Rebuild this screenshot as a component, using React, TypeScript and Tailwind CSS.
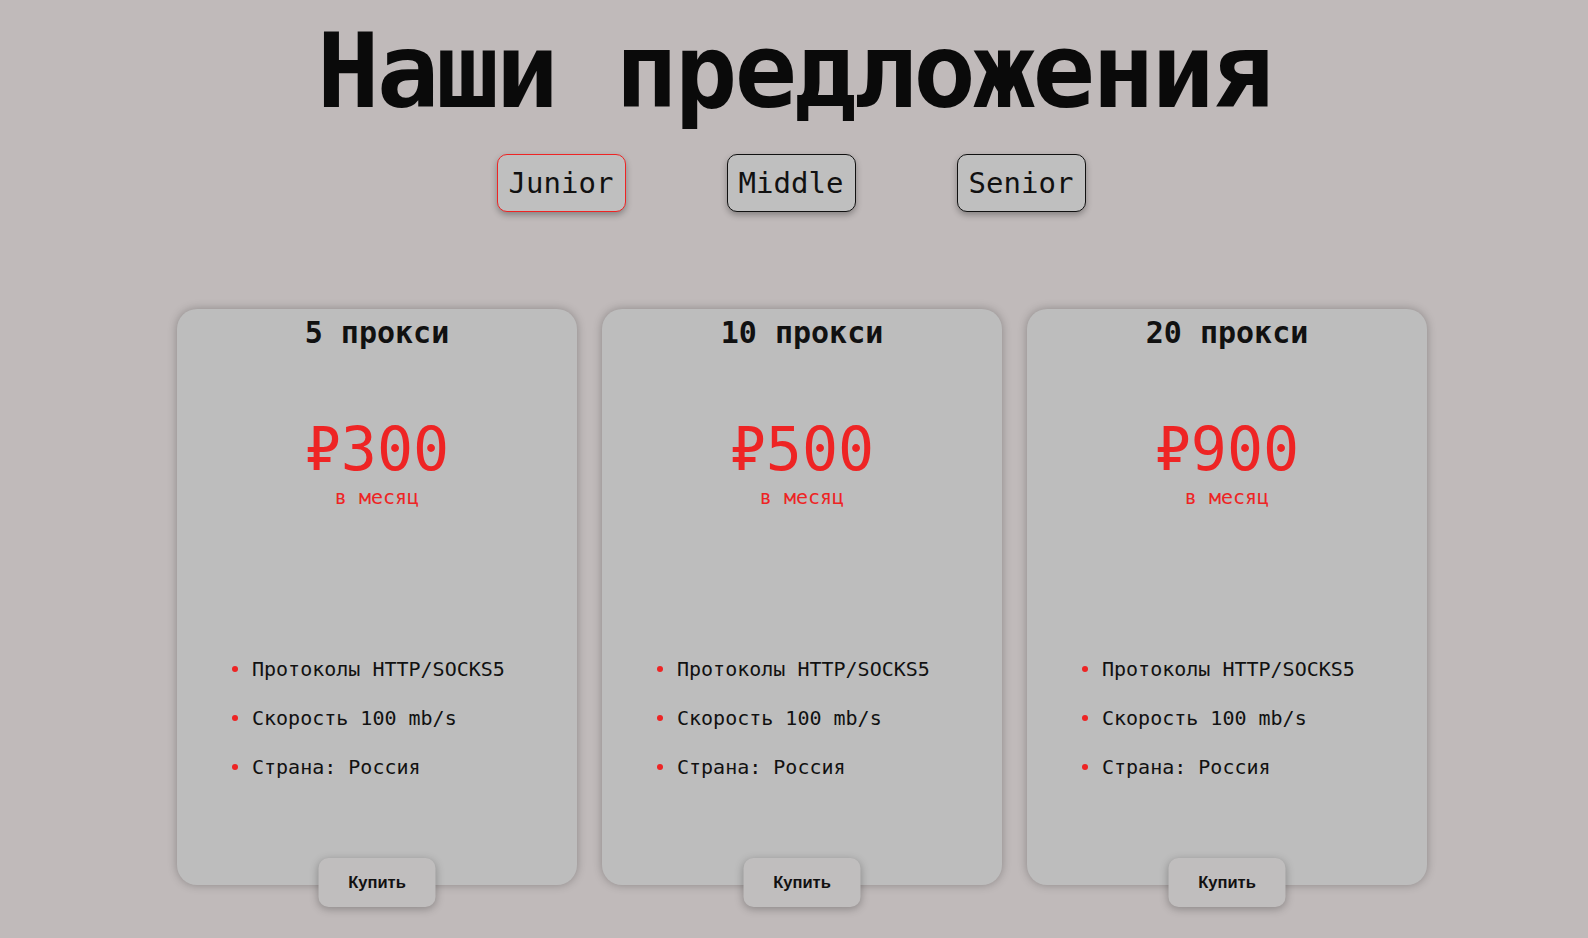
import { useState } from 'react'

const LEVELS = ['Junior', 'Middle', 'Senior'] as const

const PLANS = [
  { title: '5 прокси', price: '₽300' },
  { title: '10 прокси', price: '₽500' },
  { title: '20 прокси', price: '₽900' },
]

const FEATURES = ['Протоколы HTTP/SOCKS5', 'Скорость 100 mb/s', 'Страна: Россия']

function PlanCard({ title, price }: { title: string; price: string }) {
  return (
    <div className="relative flex h-[576px] w-[400px] flex-col items-center rounded-[20px] bg-[#bdbdbd] pt-[9px] shadow-[0_0_10px_rgba(0,0,0,0.28)]">
      <h2 className="text-[30px] font-bold leading-none text-[#111]">{title}</h2>
      <div className="mt-[71px] text-[60px] leading-none text-[#ee2424]">{price}</div>
      <div className="mt-[8px] text-[20px] leading-none text-[#ee2424]">в месяц</div>

      <ul className="mt-[152px] flex flex-col gap-[29px] self-stretch pl-[55px]">
        {FEATURES.map((f) => (
          <li key={f} className="flex items-center gap-[14px] text-[20px] leading-[20px] text-[#111]">
            <span className="h-[6px] w-[6px] flex-shrink-0 rounded-full bg-[#ee2424]" aria-hidden />
            {f}
          </li>
        ))}
      </ul>

      <button className="absolute bottom-[-22px] left-1/2 h-[49px] w-[117px] -translate-x-1/2 rounded-[10px] bg-[#c0bebe] font-['Liberation_Sans',Arial,sans-serif] text-[16.5px] font-bold text-[#111] shadow-[0_2px_8px_rgba(0,0,0,0.28)]">
        Купить
      </button>
    </div>
  )
}

export default function App() {
  const [level, setLevel] = useState<(typeof LEVELS)[number]>('Junior')

  return (
    <div className="flex min-h-screen flex-col items-center bg-[#c0baba] font-['DejaVu_Sans_Mono','Liberation_Mono',monospace]">
      <h1 className="mt-[19px] text-[104px] font-bold leading-none tracking-[-3px] text-[#0a0a0a]">
        Наши предложения
      </h1>

      <div className="mr-[6px] mt-[31px] flex gap-[101px]">
        {LEVELS.map((l) => (
          <button
            key={l}
            onClick={() => setLevel(l)}
            className={`w-[129px] rounded-[10px] border bg-[#bfbfbf] py-[13.5px] text-center text-[29px] leading-none text-[#111] shadow-[0_3px_6px_rgba(0,0,0,0.3)] ${
              level === l ? 'border-[#ee2424]' : 'border-[#111]'
            }`}
          >
            {l}
          </button>
        ))}
      </div>

      <div className="ml-4 mt-[97px] flex gap-[25px]">
        {PLANS.map((p) => (
          <PlanCard key={p.title} title={p.title} price={p.price} />
        ))}
      </div>
    </div>
  )
}
